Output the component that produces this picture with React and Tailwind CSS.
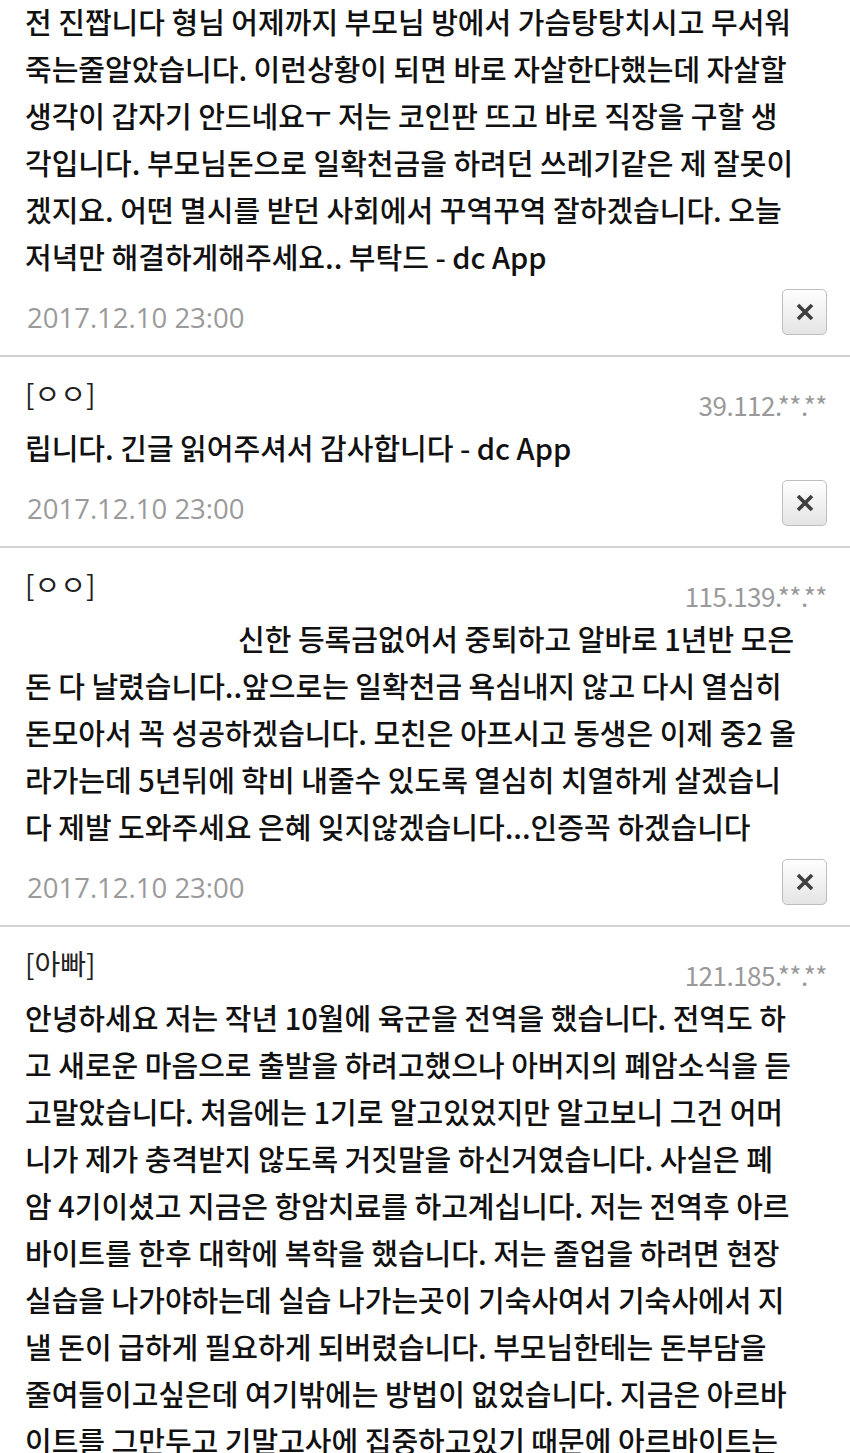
import React from "react";

const comments = [
  {
    name: null,
    ip: null,
    lines: [
      "전 진짭니다 형님 어제까지 부모님 방에서 가슴탕탕치시고 무서워",
      "죽는줄알았습니다. 이런상황이 되면 바로 자살한다했는데 자살할",
      "생각이 갑자기 안드네요ㅜ 저는 코인판 뜨고 바로 직장을 구할 생",
      "각입니다. 부모님돈으로 일확천금을 하려던 쓰레기같은 제 잘못이",
      "겠지요. 어떤 멸시를 받던 사회에서 꾸역꾸역 잘하겠습니다. 오늘",
      "저녁만 해결하게해주세요.. 부탁드 - dc App",
    ],
    date: "2017.12.10 23:00",
  },
  {
    name: "[ㅇㅇ]",
    ip: "39.112.**.**",
    lines: ["립니다. 긴글 읽어주셔서 감사합니다 - dc App"],
    date: "2017.12.10 23:00",
  },
  {
    name: "[ㅇㅇ]",
    ip: "115.139.**.**",
    indentFirst: true,
    lines: [
      "신한 등록금없어서 중퇴하고 알바로 1년반 모은",
      "돈 다 날렸습니다..앞으로는 일확천금 욕심내지 않고 다시 열심히",
      "돈모아서 꼭 성공하겠습니다. 모친은 아프시고 동생은 이제 중2 올",
      "라가는데 5년뒤에 학비 내줄수 있도록 열심히 치열하게 살겠습니",
      "다 제발 도와주세요 은혜 잊지않겠습니다...인증꼭 하겠습니다",
    ],
    date: "2017.12.10 23:00",
  },
  {
    name: "[아빠]",
    ip: "121.185.**.**",
    lines: [
      "안녕하세요 저는 작년 10월에 육군을 전역을 했습니다. 전역도 하",
      "고 새로운 마음으로 출발을 하려고했으나 아버지의 폐암소식을 듣",
      "고말았습니다. 처음에는 1기로 알고있었지만 알고보니 그건 어머",
      "니가 제가 충격받지 않도록 거짓말을 하신거였습니다. 사실은 폐",
      "암 4기이셨고 지금은 항암치료를 하고계십니다. 저는 전역후 아르",
      "바이트를 한후 대학에 복학을 했습니다. 저는 졸업을 하려면 현장",
      "실습을 나가야하는데 실습 나가는곳이 기숙사여서 기숙사에서 지",
      "낼 돈이 급하게 필요하게 되버렸습니다. 부모님한테는 돈부담을",
      "줄여들이고싶은데 여기밖에는 방법이 없었습니다. 지금은 아르바",
      "이트를 그만두고 기말고사에 집중하고있기 때문에 아르바이트는",
    ],
    date: null,
  },
];

function CloseButton() {
  return (
    <button className="w-[45px] h-[46px] rounded-[5px] border border-[#bebebe] bg-gradient-to-b from-white to-[#e4e4e4] flex items-center justify-center">
      <svg width="20" height="20" viewBox="0 0 20 20">
        <path d="M3 3 L17 17 M17 3 L3 17" stroke="#3f3f3f" strokeWidth="3.6" strokeLinecap="butt" />
      </svg>
    </button>
  );
}

function Comment({ c, first }) {
  return (
    <div className={first ? "-mt-[2px]" : ""}>
      {c.name && (
        <div className="flex justify-between h-[67px]">
          <div className="mt-[19px] text-[28px] leading-[34px] text-[#222]">{c.name}</div>
          <div className="self-end mb-[4px] text-[26px] leading-[30px] text-[#999] tracking-[-0.5px]">
            {c.ip}
          </div>
        </div>
      )}
      <div className="text-[29px] leading-[47px] text-[#111] font-medium">
        {c.lines.map((l, i) => (
          <div
            key={i}
            className={"whitespace-nowrap " + (c.indentFirst && i === 0 ? "pl-[213px]" : "")}
          >
            {l}
          </div>
        ))}
      </div>
      {c.date && (
        <div className="flex justify-between items-end mt-[9px] pb-[20px]">
          <div
            className="text-[27.5px] leading-[34px] text-[#9a9a9a] pl-[2px]"
            style={{ fontFamily: '"Open Sans", sans-serif' }}
          >
            {c.date}
          </div>
          <CloseButton />
        </div>
      )}
    </div>
  );
}

export default function App() {
  return (
    <div
      className="w-[850px] h-[1453px] overflow-hidden bg-white"
      style={{ fontFamily: '"Noto Sans CJK KR", "Noto Sans", sans-serif' }}
    >
      {comments.map((c, i) => (
        <div key={i}>
          <div className="pl-[25px] pr-[23px]">
            <Comment c={c} first={i === 0} />
          </div>
          {c.date && <div className="h-[2px] bg-[#d2d2d2]" />}
        </div>
      ))}
    </div>
  );
}
